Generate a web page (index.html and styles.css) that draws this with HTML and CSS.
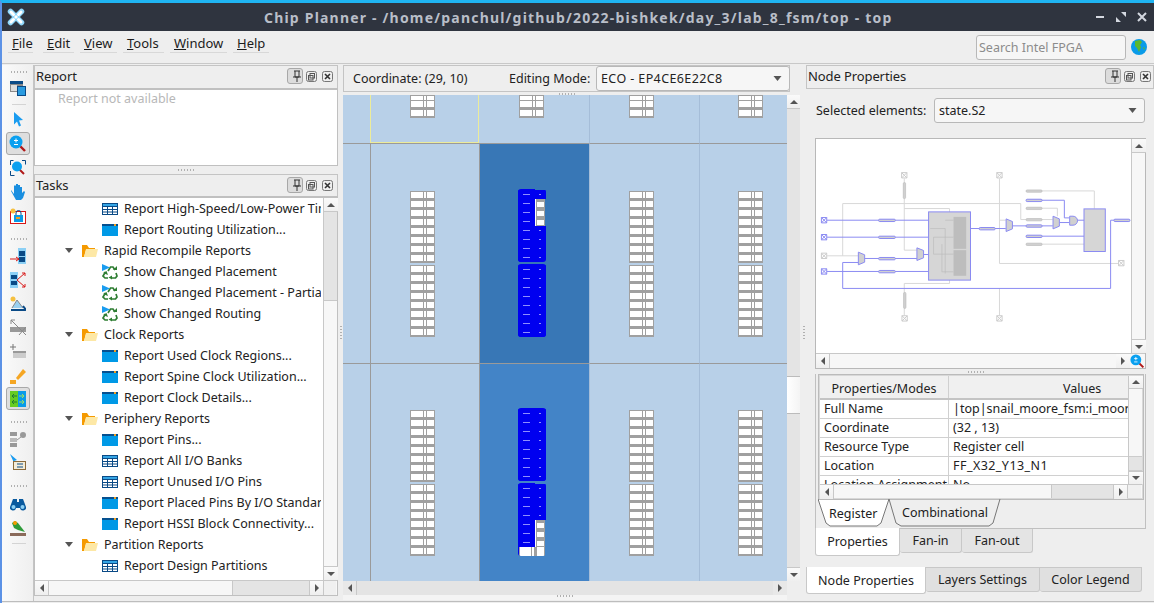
FILE: index.html
```html
<!DOCTYPE html>
<html lang="en">
<head>
<meta charset="utf-8">
<title>Chip Planner</title>
<link rel="stylesheet" href="styles.css">
</head>
<body>
<svg class="defs" width="0" height="0" aria-hidden="true">
  <symbol id="rep" viewBox="0 0 16 12"><rect width="16" height="12" fill="#0099e6"/><rect width="16" height="2" fill="#06508f"/><rect x="12" width="2" height="2" fill="#f0a020"/></symbol>
  <symbol id="tbl" viewBox="0 0 16 12"><rect x=".5" y=".5" width="15" height="11" fill="#fff" stroke="#0a4a86"/><rect x="1" y="1" width="14" height="2" fill="#35a5e5"/><path d="M1 3.500h14M1 6.500h14M1 9h14M5.500 4v7M10.500 4v7" stroke="#0a4a86" fill="none"/></symbol>
  <symbol id="fold" viewBox="0 0 16 12"><path d="M0 12V0h5l2 3h6v2H4L2 12z" fill="#f59a00"/><path d="M2 12 4 4h12l-2 8z" fill="#fde8a6"/></symbol>
  <symbol id="rec" viewBox="0 0 16 16"><path d="M6 7 8.500 3h2.500l2 3M14 9l1 3-1.500 2H10M6 14H3l-2-2 2.500-4" fill="none" stroke="#2e7d32" stroke-width="1.7"/><path d="M11 6h4V2zM10 11.500v4l-3.500-2zM1 9l3.500-2 1.500 4z" fill="#2e7d32"/><path d="M0 0l8 3.500L0 7z" fill="#1a9cf0"/></symbol>
  <symbol id="tri" viewBox="0 0 8 5"><path d="M0 0h8L4 5z" fill="#555"/></symbol>
  <symbol id="pin" viewBox="0 0 16 16"><path d="M5 3h6M6 3v6h4V3M4 9h8M8 9v5" fill="none" stroke="#333"/></symbol>
  <symbol id="flt" viewBox="0 0 11 11"><rect x=".5" y=".5" width="10" height="10" rx="2" fill="none" stroke="#777"/><rect x="4" y="2.500" width="4.500" height="4.500" fill="none" stroke="#555"/><rect x="2.500" y="4.500" width="4.500" height="4.500" fill="none" stroke="#555"/></symbol>
  <symbol id="cls" viewBox="0 0 11 11"><rect x=".5" y=".5" width="10" height="10" rx="2" fill="none" stroke="#777"/><path d="M3 3l5 5M8 3l-5 5" stroke="#333" stroke-width="1.600"/></symbol>
  <symbol id="zoomi" viewBox="0 0 18 18"><path d="M10 10l6 6" stroke="#b01818" stroke-width="2.400"/><circle cx="7" cy="7" r="6.500" fill="#0aa0f0"/><path d="M7 3.500v4M5 5.500h4M5 9.500h4" stroke="#fff" fill="none"/></symbol>
</svg>

<div class="window">
  <header class="titlebar">
    <svg class="logo" width="18" height="18" viewBox="0 0 18 18"><path d="M3.500 3.500l11 11M14.500 3.500l-11 11" stroke="#8fd6fa" stroke-width="5.500" stroke-linecap="round"/><path d="M4 4l2.500 2.500M14 4l-2.500 2.500M4 14l2.500-2.500M14 14l-2.500-2.500" stroke="#fff" stroke-width="3" stroke-linecap="round"/><path d="M9 7l2 2-2 2-2-2z" fill="#fff"/></svg>
    <h1 class="title">Chip Planner - /home/panchul/github/2022-bishkek/day_3/lab_8_fsm/top - top</h1>
    <div class="winbtns">
      <svg width="12" height="12" viewBox="0 0 12 12"><path d="M2 6h8" stroke="#d4d8e0" stroke-width="2"/></svg>
      <svg width="12" height="12" viewBox="0 0 12 12"><path d="M6 1h5v5zM1 6v5h5z" fill="#d4d8e0"/></svg>
      <svg width="12" height="12" viewBox="0 0 12 12"><path d="M2 2l8 8M10 2l-8 8" stroke="#d4d8e0" stroke-width="2"/></svg>
    </div>
  </header>

  <nav class="menubar">
    <span class="mi m1"><u>F</u>ile</span>
    <span class="mi m2"><u>E</u>dit</span>
    <span class="mi m3"><u>V</u>iew</span>
    <span class="mi m4"><u>T</u>ools</span>
    <span class="mi m5"><u>W</u>indow</span>
    <span class="mi m6"><u>H</u>elp</span>
    <span class="search">Search Intel FPGA</span>
    <svg class="globe" width="16" height="16" viewBox="0 0 16 16"><circle cx="8" cy="8" r="8" fill="#0a9be8"/><path d="M4 2l5-1 2 2-2 3 1 2-2 5-2-4-2-2z" fill="#5cb82e"/><path d="M12 8l2 1-1 2z" fill="#5cb82e"/></svg>
  </nav>

  <main class="main">
    <aside class="toolbar">
      <i class="handle h1"></i>
      <svg class="ti t87" width="16" height="16" viewBox="0 0 16 16"><rect y="1" width="13" height="11" fill="#8a8a8a"/><rect y="1" width="13" height="3" fill="#0a4a86"/><rect x="1" y="5" width="6" height="6" fill="#ddd"/><rect x="7.500" y="6.500" width="8" height="9" fill="#2a9be0" stroke="#0a4a86"/></svg>
      <i class="tsep s104"></i>
      <svg class="ti t118" width="16" height="16" viewBox="0 0 16 16"><path d="M4 1l9 8-4 .5 2 5-2 1-2-5-3 3z" fill="#1a9cf0"/></svg>
      <span class="tbtn b132"><svg width="18" height="18"><use href="#zoomi"/></svg></span>
      <svg class="ti t159" width="16" height="16" viewBox="0 0 16 16"><path d="M.5 5V.5h3M12 .5h3.500v4M.5 11v4.500h4" fill="none" stroke="#0a4a86"/><path d="M8 8l6 6" stroke="#b01818" stroke-width="2"/><circle cx="7" cy="6.500" r="5" fill="#0aa0f0"/></svg>
      <svg class="ti t183" width="16" height="16" viewBox="0 0 16 16"><path d="M1 6l3 4V2l1-1 1 1v4-6h2v6-5h2v6-4h2v6l2-2 1 1-2 6-2 2H6L1 7z" fill="#1a8fe0"/></svg>
      <svg class="ti t207" width="16" height="16" viewBox="0 0 16 16"><rect x=".5" y="3.500" width="15" height="12" fill="#fff" stroke="#d81818"/><circle cx="3" cy="3" r="2.500" fill="#f5c040"/><rect x="4" y="7" width="9" height="7" fill="#0a9be8"/><path d="M6 7V5a2.500 2.500 0 0 1 5 0v2" stroke="#0a4a86" fill="none"/><path d="M6 10h4" stroke="#f0a020" stroke-width="2"/></svg>
      <i class="handle h238"></i>
      <svg class="ti t248" width="16" height="16" viewBox="0 0 16 16"><rect x="8" y="0" width="8" height="16" fill="#8cd0f5"/><rect x="9" y="3" width="6" height="5" fill="#0a4a86"/><rect x="9" y="9" width="6" height="5" fill="#0a4a86"/><path d="M0 11h9M6 9l3 2-3 2" stroke="#d81818" fill="none"/></svg>
      <svg class="ti t271" width="16" height="16" viewBox="0 0 16 16"><rect width="8" height="16" fill="#8cd0f5"/><rect x="1" y="3" width="6" height="4" fill="#0a4a86"/><rect x="1" y="9" width="6" height="4" fill="#0a4a86"/><path d="M7 8l8-7M7 8l8 7M12 1h3v3M12 15h3v-3" stroke="#d81818" fill="none"/></svg>
      <svg class="ti t296" width="16" height="16" viewBox="0 0 16 16"><circle cx="3" cy="3" r="2.500" fill="#f5c040"/><path d="M2 12l5-8 6 8" fill="#9ad0f0" stroke="#888"/><path d="M1 14h15l-3-4" fill="none" stroke="#0a4a86" stroke-width="2"/></svg>
      <svg class="ti t318" width="16" height="16" viewBox="0 0 16 16"><rect y="8" width="16" height="5" fill="#999"/><path d="M1 1l9 9M1 1h4M1 1v4M9 9l7 7M16 8l-7 8" stroke="#888" fill="none"/></svg>
      <svg class="ti t342" width="16" height="16" viewBox="0 0 16 16"><path d="M3 1v6M0 4h6" stroke="#777"/><rect x="3" y="8" width="13" height="2" fill="#999"/><rect x="3" y="10" width="13" height="5" fill="#ccc"/></svg>
      <svg class="ti t367" width="16" height="16" viewBox="0 0 16 16"><path d="M6 10l7-9 3 3-8 8z" fill="#f5a623"/><rect y="12" width="6" height="4" fill="#f5a623"/></svg>
      <span class="tbtn b387"><svg width="16" height="16" viewBox="0 0 16 16"><rect width="8" height="16" fill="#66cc22"/><rect x="8" width="8" height="16" fill="#0a9be8"/><path d="M7 5H2l2-2M2 5l2 2" stroke="#1c7a30" fill="none"/><path d="M9 11h5l-2-2M14 11l-2 2M9 5h5l-2-2M14 5l-2 2" stroke="#9fe060" fill="none"/><path d="M7 11H2l2-2M2 11l2 2" stroke="#1c7a30" fill="none"/></svg></span>
      <i class="handle h421"></i>
      <svg class="ti t430" width="16" height="16" viewBox="0 0 16 16"><rect y="1" width="7" height="4" fill="#999"/><rect y="7" width="7" height="4" fill="#bbb"/><rect y="12" width="7" height="4" fill="#999"/><circle cx="13" cy="4" r="3" fill="#999"/><path d="M7 9l4-3" stroke="#999"/></svg>
      <svg class="ti t453" width="16" height="16" viewBox="0 0 16 16"><path d="M0 0l7 6-3 1 1 4z" fill="#1a9cf0"/><rect x="3.500" y="7.500" width="12" height="8" fill="#f3ecd8" stroke="#8a6a3a"/><path d="M7 10h6M7 13h6" stroke="#0a4a86"/></svg>
      <i class="handle h485"></i>
      <svg class="ti t495" width="16" height="16" viewBox="0 0 16 16"><path d="M3 3h4v3h2V3h4l3 8a3 3 0 1 1-6 1H6a3 3 0 1 1-6-1z" fill="#0a5a9e"/><circle cx="3.500" cy="11" r="2" fill="#8cd0f5"/><circle cx="12.500" cy="11" r="2" fill="#8cd0f5"/></svg>
      <svg class="ti t519" width="16" height="16" viewBox="0 0 16 16"><path d="M2 3l3-2 3 2 7 9-7-2-4-2z" fill="#2e9b3a"/><circle cx="5" cy="3" r="2" fill="#f59a00"/><path d="M0 13h16v3H0z" fill="#8a6a5a"/></svg>
      <i class="tsep s543"></i>
    </aside>

    <section class="leftcol">
      <div class="dockhead"><span class="dtitle">Report</span><span class="dockbtns"><span class="pinbox"><svg width="16" height="16"><use href="#pin"/></svg></span><svg width="11" height="11"><use href="#flt"/></svg><svg width="11" height="11"><use href="#cls"/></svg></span></div>
      <div class="reportbody">Report not available</div>
      <div class="hsplit"><i class="handle"></i></div>
      <div class="dockhead"><span class="dtitle">Tasks</span><span class="dockbtns"><span class="pinbox"><svg width="16" height="16"><use href="#pin"/></svg></span><svg width="11" height="11"><use href="#flt"/></svg><svg width="11" height="11"><use href="#cls"/></svg></span></div>
      <div class="taskbox">
        <div class="taskupper">
          <div class="tree">
            <div class="leaf"><svg width="16" height="12"><use href="#tbl"/></svg>Report High-Speed/Low-Power Timing Summary</div>
            <div class="leaf"><svg width="16" height="12"><use href="#rep"/></svg>Report Routing Utilization...</div>
            <div class="parent"><svg class="arr" width="8" height="5"><use href="#tri"/></svg><svg width="16" height="12"><use href="#fold"/></svg>Rapid Recompile Reports</div>
            <div class="leaf"><svg width="16" height="16"><use href="#rec"/></svg>Show Changed Placement</div>
            <div class="leaf"><svg width="16" height="16"><use href="#rec"/></svg>Show Changed Placement - Partial</div>
            <div class="leaf"><svg width="16" height="16"><use href="#rec"/></svg>Show Changed Routing</div>
            <div class="parent"><svg class="arr" width="8" height="5"><use href="#tri"/></svg><svg width="16" height="12"><use href="#fold"/></svg>Clock Reports</div>
            <div class="leaf"><svg width="16" height="12"><use href="#rep"/></svg>Report Used Clock Regions...</div>
            <div class="leaf"><svg width="16" height="12"><use href="#rep"/></svg>Report Spine Clock Utilization...</div>
            <div class="leaf"><svg width="16" height="12"><use href="#rep"/></svg>Report Clock Details...</div>
            <div class="parent"><svg class="arr" width="8" height="5"><use href="#tri"/></svg><svg width="16" height="12"><use href="#fold"/></svg>Periphery Reports</div>
            <div class="leaf"><svg width="16" height="12"><use href="#rep"/></svg>Report Pins...</div>
            <div class="leaf"><svg width="16" height="12"><use href="#tbl"/></svg>Report All I/O Banks</div>
            <div class="leaf"><svg width="16" height="12"><use href="#tbl"/></svg>Report Unused I/O Pins</div>
            <div class="leaf"><svg width="16" height="12"><use href="#rep"/></svg>Report Placed Pins By I/O Standard</div>
            <div class="leaf"><svg width="16" height="12"><use href="#rep"/></svg>Report HSSI Block Connectivity...</div>
            <div class="parent"><svg class="arr" width="8" height="5"><use href="#tri"/></svg><svg width="16" height="12"><use href="#fold"/></svg>Partition Reports</div>
            <div class="leaf"><svg width="16" height="12"><use href="#tbl"/></svg>Report Design Partitions</div>
          </div>
          <div class="vbar vtask">
            <span class="sbtn"><i class="up"></i></span>
            <span class="thumb th-task"></span>
            <span class="track"></span>
            <span class="sbtn"><i class="down"></i></span>
          </div>
        </div>
        <div class="hbar">
          <span class="sbtn"><i class="left"></i></span>
          <span class="track tr-a"></span>
          <span class="thumb th-a"></span>
          <span class="sbtn"><i class="right"></i></span>
          <span class="corner"></span>
        </div>
      </div>
    </section>
    <div class="lsplit"><i class="vhandle"></i></div>

    <section class="centercol">
      <div class="ctoolbar">
        <span class="coord">Coordinate: (29, 10)</span>
        <span class="edit">Editing Mode:</span>
        <span class="combo cmode">ECO - EP4CE6E22C8<svg width="9" height="5"><use href="#tri"/></svg></span>
      </div>
      <div class="dotsrow"><i class="handle"></i></div>
      <div class="canvasrow">
      <div class="canvas">
        <div class="cell c0 r0"></div>
        <div class="cell sel r0"><div class="grp cut"></div></div>
        <div class="cell r0 lt"><div class="grp cut"></div></div>
        <div class="cell r0 lt"><div class="grp cut"></div></div>
        <div class="cell r0 lt p39"><div class="grp cut"></div></div>

        <div class="cell c0 r1"></div>
        <div class="cell r1"><div class="chip"><div class="grp"></div><div class="grp"></div></div></div>
        <div class="cell r1 dark1 blue">
          <div class="bchip">
            <div class="bgrp"><b class="bw"></b><b class="bh"></b><b class="bh"></b><b class="bh"></b><b class="bw"></b><b class="bw"></b><b class="bw"></b><b class="bw"></b></div>
            <div class="bgrp"><b class="bw"></b><b class="bw"></b><b class="bw"></b><b class="bw"></b><b class="bw"></b><b class="bw"></b><b class="bw"></b><b class="bw"></b></div>
          </div>
        </div>
        <div class="cell r1 lt"><div class="chip"><div class="grp"></div><div class="grp"></div></div></div>
        <div class="cell r1 lt p39"><div class="chip"><div class="grp"></div><div class="grp"></div></div></div>

        <div class="cell c0 r2"></div>
        <div class="cell r2"><div class="chip"><div class="grp"></div><div class="grp"></div></div></div>
        <div class="cell r2 dark2 blue">
          <div class="bchip">
            <div class="bgrp"><b class="bw"></b><b class="bw"></b><b class="bw"></b><b class="bw"></b><b class="bw"></b><b class="bw"></b><b class="bw"></b><b class="bw"></b></div>
            <div class="bgrp"><b class="bw"></b><b class="bw"></b><b class="bw"></b><b class="bw"></b><b class="bh"></b><b class="bh"></b><b class="bh"></b><b class="bg"></b></div>
          </div>
        </div>
        <div class="cell r2 lt"><div class="chip"><div class="grp"></div><div class="grp"></div></div></div>
        <div class="cell r2 lt p39"><div class="chip"><div class="grp"></div><div class="grp"></div></div></div>
      </div>
      <div class="vbar vcanvas">
        <span class="sbtn"><i class="up"></i></span>
        <span class="track t-a"></span>
        <span class="thumb th-canvas"></span>
        <span class="track"></span>
        <span class="sbtn"><i class="down"></i></span>
      </div>
      </div>
      <div class="hbar hcanvas">
        <span class="sbtn"><i class="left"></i></span>
        <span class="track"></span>
        <span class="sbtn"><i class="right"></i></span>
      </div>
      <div class="cbottom2"><i class="handle"></i></div>
    </section>

    <div class="vsplit"><i class="vhandle"></i></div>

    <section class="rightcol">
      <div class="dockhead"><span class="dtitle">Node Properties</span><span class="dockbtns"><span class="pinbox"><svg width="16" height="16"><use href="#pin"/></svg></span><svg width="11" height="11"><use href="#flt"/></svg><svg width="11" height="11"><use href="#cls"/></svg></span></div>
      <div class="selrow"><span class="sellabel">Selected elements:</span><span class="combo csel">state.S2<svg width="9" height="5"><use href="#tri"/></svg></span></div>
      <div class="diagframe">
        <div class="diagtop">
          <svg class="diagram" width="315" height="215" viewBox="17 26 946 646">
            <g fill="none" stroke="#d8d8d8" stroke-width="3">
              <path d="M50 377H143M97 377V220H632V268H728M282 145V360H320M282 235H418V460H282V555M568 145V400H925M568 475V555M568 270H587M648 182H853V235M648 234H742V258M648 342H822"/>
            </g>
            <g fill="none" stroke="#8b8bf2" stroke-width="3">
              <path d="M50 270H355M50 321H355M50 424H355M163 385H320M340 373H355M97 397H143M97 397V475H902V270H960M481 295H587M607 287H728M748 277H778M648 210H763V263H778M800 270H822M648 318H822"/>
            </g>
            <rect x="355" y="245" width="126" height="205" fill="#d6d6d6" stroke="#8b8bf2" stroke-width="3"/>
            <rect x="430" y="260" width="38" height="96" fill="#bdbdbd"/>
            <rect x="430" y="360" width="38" height="77" fill="#bdbdbd"/>
            <path d="M360 295H405V430M370 321H430M370 321V372H430M395 342V425H430M405 270H430" fill="none" stroke="#bbb" stroke-width="2"/>
            <rect x="822" y="236" width="64" height="128" fill="#d6d6d6" stroke="#8b8bf2" stroke-width="3"/>
            <g fill="#d0d0d0" stroke="#8b8bf2" stroke-width="3">
              <path d="M144 366l19 8v22l-19 8zM320 353l20 8v22l-20 8zM588 266l19 8v22l-19 8zM729 258l19 8v22l-19 8zM779 258h10a13 13 0 0 1 0 27h-10z"/>
              <rect x="205" y="267" width="50" height="7" rx="3"/><rect x="205" y="318" width="50" height="7" rx="3"/><rect x="205" y="382" width="50" height="7" rx="3"/><rect x="205" y="421" width="50" height="7" rx="3"/><rect x="507" y="292" width="48" height="7" rx="3"/><rect x="648" y="207" width="48" height="7" rx="3"/><rect x="648" y="284" width="48" height="7" rx="3"/><rect x="648" y="315" width="48" height="7" rx="3"/><rect x="912" y="267" width="48" height="7" rx="3"/>
            </g>
            <g fill="#d0d0d0" stroke="#bbb" stroke-width="2">
              <rect x="648" y="179" width="48" height="7" rx="3"/><rect x="648" y="231" width="48" height="7" rx="3"/><rect x="648" y="265" width="48" height="7" rx="3"/><rect x="648" y="339" width="48" height="7" rx="3"/><rect x="279" y="157" width="7" height="48" rx="3"/><rect x="280" y="487" width="7" height="48" rx="3"/>
            </g>
            <g fill="#fff" stroke="#8b8bf2" stroke-width="3">
              <path d="M33 262h16v16H33zM33 262l16 16M49 262l-16 16M33 313h16v16H33zM33 313l16 16M49 313l-16 16M33 416h16v16H33zM33 416l16 16M49 416l-16 16"/>
            </g>
            <g fill="#fff" stroke="#ccc" stroke-width="3">
              <path d="M33 369h16v16H33zM33 369l16 16M49 369l-16 16M274 127h16v16h-16zM274 127l16 16M290 127l-16 16M560 127h16v16h-16zM560 127l16 16M576 127l-16 16M926 391h16v16h-16zM926 391l16 16M942 391l-16 16M275 557h16v16h-16zM275 557l16 16M291 557l-16 16M560 557h16v16h-16zM560 557l16 16M576 557l-16 16"/>
            </g>
          </svg>
          <div class="vbar vdiag">
            <span class="sbtn"><i class="up"></i></span>
            <span class="track"></span>
            <span class="sbtn"><i class="down"></i></span>
          </div>
        </div>
        <div class="hbar hdiag">
          <span class="sbtn"><i class="left"></i></span>
          <span class="track"></span>
          <span class="sbtn"><i class="right"></i></span>
          <svg class="corner-zoom" width="15" height="15"><use href="#zoomi"/></svg>
        </div>
      </div>
      <div class="rsplit"><i class="handle"></i></div>

      <div class="tabwidget">
        <div class="tblframe">
          <div class="tbltop">
            <div class="tbl">
              <div class="tr th"><span class="c1 hc">Properties/Modes</span><span class="c2 hc">Values</span></div>
              <div class="tr"><span class="c1">Full Name</span><span class="c2">|top|snail_moore_fsm:i_moore_fsm|state.S2</span></div>
              <div class="tr"><span class="c1">Coordinate</span><span class="c2">(32 , 13)</span></div>
              <div class="tr"><span class="c1">Resource Type</span><span class="c2">Register cell</span></div>
              <div class="tr"><span class="c1">Location</span><span class="c2 caps">FF_X32_Y13_N1</span></div>
              <div class="tr"><span class="c1">Location Assignment</span><span class="c2">No</span></div>
            </div>
            <div class="vbar vtbl">
              <span class="sbtn small"><i class="up"></i></span>
              <span class="track"></span>
              <span class="thumb th-tbl"></span>
              <span class="sbtn small"><i class="down"></i></span>
            </div>
          </div>
          <div class="hbar htbl">
            <span class="sbtn"><i class="left"></i></span>
            <span class="track tr-b"></span>
            <span class="thumb th-b"></span>
            <span class="sbtn"><i class="right"></i></span>
            <span class="corner"></span>
          </div>
        </div>
        <div class="modetabs">
          <svg class="tabshape" width="190" height="30" viewBox="0 0 190 30"><path d="M0 0l8 24 4 3h47l4-3L71 0z" fill="#fff" stroke="#777"/><path d="M71 0l7 24 5 3h88l4-3 7-24" fill="none" stroke="#777"/></svg>
          <span class="mtab mreg">Register</span>
          <span class="mtab mcomb">Combinational</span>
        </div>
      </div>

      <div class="fantabs">
        <span class="ftab on">Properties</span>
        <span class="ftab fanin">Fan-in</span>
        <span class="ftab fanout">Fan-out</span>
      </div>

      <div class="spacer"></div>

      <div class="bottabs">
        <span class="btab on">Node Properties</span>
        <span class="btab lay">Layers Settings</span>
        <span class="btab leg">Color Legend</span>
      </div>
    </section>
  </main>
  <footer class="status"></footer>
</div>
</body>
</html>
```
FILE: styles.css
```css
* { box-sizing: border-box; }
html, body { margin: 0; padding: 0; }
body {
  width: 1154px; height: 603px; overflow: hidden;
  font-family: "Noto Sans", sans-serif; font-size: 12.5px; color: #1c1c1c;
  background: #eeeeee;
}
.defs { position: absolute; }
svg { display: block; flex: none; }
.window {
  width: 1154px; height: 603px; display: flex; flex-direction: column;
  border-top: 3px solid #1fb4f2; border-left: 2px solid #5c92e6;
}
.titlebar {
  height: 28px; background: #2f343f; display: flex; align-items: center;
  padding-left: 5px; flex: none;
}
.title {
  margin: 0 0 0 239px; font-size: 14px; font-weight: 700; color: #b9bec8;
  letter-spacing: 1.2px; white-space: nowrap; font-family: "Noto Sans", sans-serif;
}
.winbtns { margin-left: auto; display: flex; gap: 9px; padding-right: 6px; }

.menubar {
  height: 33px; flex: none; display: flex; align-items: flex-start;
  padding: 0 0 0 6px; border-bottom: 1px solid #c8c8c8; background: #eeeeee;
  font-size: 13px;
}
.mi {
  display: block; height: 22px; line-height: 22px; padding: 1px 0 0 4px; border-bottom: 1px solid #d8d8d8;
}
.m1 { width: 25px; } .m2 { width: 31px; margin-left: 10px; } .m3 { width: 37px; margin-left: 6px; }
.m4 { width: 41px; margin-left: 6px; } .m5 { width: 57px; margin-left: 6px; } .m6 { width: 36px; margin-left: 6px; }
.search {
  margin: 4px 0 0 707px; width: 150px; height: 25px; border: 1px solid #b8b8b8; border-radius: 3px;
  background: #f6f6f6; color: #8c8c8c; line-height: 23px; padding-left: 2px; font-size: 12.5px;
}
.globe { margin: 8px 0 0 5px; }

.main { flex: 1; display: flex; min-height: 0; padding-top: 1px; }
.status { height: 2px; flex: none; border-top: 1px solid #bdbdbd; }

/* left tool strip: a free column of icons at their own offsets */
.toolbar {
  width: 32px; flex: none; position: relative;
  background: linear-gradient(to right, #fafafa, #efefef);
  border-right: 1px solid #c4c4c4;
}
.ti { position: absolute; left: 8px; }
.t87 { top: 15px; } .t118 { top: 46px; } .t159 { top: 95px; } .t183 { top: 119px; } .t207 { top: 143px; }
.t248 { top: 183px; } .t271 { top: 207px; } .t296 { top: 231px; } .t318 { top: 254px; } .t342 { top: 278px; }
.t367 { top: 303px; } .t430 { top: 366px; } .t453 { top: 389px; } .t495 { top: 431px; } .t519 { top: 455px; }
.tsep { position: absolute; left: 10px; width: 14px; height: 1px; background: #d4d4d4; }
.s104 { top: 39px; } .s543 { top: 478px; }
.toolbar .handle { position: absolute; left: 9px; }
.h1 { top: 6px; } .h238 { top: 173px; } .h421 { top: 356px; } .h485 { top: 420px; }
.tbtn {
  position: absolute; left: 4px; width: 24px; height: 23px; border: 1px solid #a8a8a8; border-radius: 3px;
  background: #dedede; display: flex; align-items: center; justify-content: center;
}
.b132 { top: 67px; } .b387 { top: 322px; }
.handle {
  display: block; width: 16px; height: 2px;
  background: repeating-linear-gradient(to right, #b0b0b0 0 1px, transparent 1px 3px);
}

.leftcol { width: 304px; flex: none; display: flex; flex-direction: column; padding-bottom: 5px; }
.dockhead {
  height: 24px; flex: none; border: 1px solid #c4c4c4; display: flex; align-items: center;
  padding-left: 1px; background: #eeeeee; color: #222;
}
.dtitle { display: block; font-size: 13px; letter-spacing: -.1px; padding-bottom: 2px; }
.dockbtns { margin-left: auto; display: flex; align-items: center; gap: 4px; padding: 0 2px 2px 0; }
.leftcol .dockbtns { padding-right: 4px; }
.dockbtns svg:last-child { margin-left: 1px; }
.pinbox {
  width: 16px; height: 16px; border: 1px solid #a8a8a8; border-radius: 3px; background: #dcdcdc;
  display: block; margin-right: -1px;
}
.pinbox svg { margin: -1px; }
.reportbody {
  height: 78px; flex: none; background: #fff; border: 1px solid #c0c0c0; border-top-width: 2px;
  color: #b8b8b8; padding: 0 0 0 23px; line-height: 17px; margin-top: -1px;
}
.hsplit { height: 8px; flex: none; display: flex; justify-content: center; align-items: center; }
.taskbox { flex: 1; min-height: 0; display: flex; flex-direction: column; border: 1px solid #c0c0c0; border-top: 2px solid #c0c0c0; background: #fff; margin-top: -2px; }
.taskupper { flex: 1; min-height: 0; display: flex; }
.tree { width: 288px; flex: none; overflow: hidden; white-space: nowrap; clip-path: inset(0 2px 0 0); }
.leaf, .parent { height: 21px; display: flex; align-items: center; color: #222; }
.leaf { padding-left: 67px; }
.leaf svg { margin-right: 6px; }
.parent { padding-left: 30px; }
.parent .arr { margin-right: 9px; }
.parent svg:nth-child(2) { margin-right: 6px; }
.lsplit { width: 5px; flex: none; display: flex; align-items: center; padding: 0 0 0 2px; }
.vbar { display: flex; flex-direction: column; flex: none; background: #f7f7f7; border-left: 1px solid #c8c8c8; }
.hbar { display: flex; flex: none; height: 15px; background: #f7f7f7; border-top: 1px solid #c8c8c8; }
.vtask { width: 14px; }
.sbtn { flex: none; display: flex; align-items: center; justify-content: center; width: 14px; height: 14px; background: linear-gradient(#fafafa, #efefef); border: 0 solid #c8c8c8; }
.vbar .sbtn:first-child { border-bottom-width: 1px; }
.vbar .sbtn:last-child { border-top-width: 1px; }
.hbar .sbtn:first-child { border-right-width: 1px; }
.hbar .sbtn:nth-last-child(2) { border-left-width: 1px; }
.up, .down, .left, .right { display: block; width: 0; height: 0; border: 4px solid transparent; }
.up { border-top: 0; border-bottom: 4px solid #555; }
.down { border-bottom: 0; border-top: 4px solid #555; }
.left { border-left: 0; border-right: 4px solid #555; }
.right { border-right: 0; border-left: 4px solid #555; }
.track { flex: 1; display: block; }
.thumb { display: block; flex: none; background: #e4e4e4; }
.th-task { height: 89px; border-bottom: 1px solid #c8c8c8; }
.tr-a { flex: none; width: 183px; }
.th-a { width: 77px; border-left: 1px solid #c8c8c8; }
.corner { width: 13px; flex: none; display: block; border-left: 1px solid #c8c8c8; background: #f0f0f0; }

.centercol { width: 457px; flex: none; display: flex; flex-direction: column; }
.ctoolbar {
  height: 27px; width: 447px; flex: none; display: flex; align-items: center; padding-left: 9px;
  border: 1px solid #c4c4c4; background: #eeeeee; color: #222; white-space: nowrap;
}
.coord { display: block; width: 156px; flex: none; }
.edit { display: block; width: 87px; flex: none; }
.combo {
  display: flex; align-items: center; justify-content: space-between; height: 25px;
  border: 1px solid #b8b8b8; border-radius: 3px; background: #f6f6f6; padding: 0 7px 0 4px; color: #222;
}
.cmode { width: 194px; flex: none; letter-spacing: .4px; }
.dotsrow { height: 3px; width: 447px; flex: none; display: flex; justify-content: center; align-items: center; }
.canvasrow { display: flex; flex: none; height: 486px; }
.canvas {
  height: 486px; flex: none; width: 444px; display: grid; overflow: hidden;
  grid-template-columns: 27px 109px 110px 110px 88px;
  grid-template-rows: 48px 220px 218px;
  background: #b8d0e8;
}
.vcanvas { width: 13px; background: #e4e4e4; border-left: 0; }
.vcanvas .sbtn { width: 13px; }
.vcanvas .t-a { flex: none; height: 267px; }
.th-canvas { height: 38px; background: linear-gradient(to right, #ffffff, #f4f4f4); border-top: 1px solid #bbb; border-bottom: 1px solid #bbb; }
.hcanvas { width: 444px; height: 14px; background: #e4e4e4; border-top: 0; }
.hcanvas .sbtn { height: 14px; background: #e8e8e8; }
.cell { border-left: 1px solid #9a9a9a; border-top: 1px solid #9a9a9a; padding-left: 39px; background: #b8d0e8; overflow: hidden; }
.c0 { border-left: 0; padding: 0; }
.r0 { border-top: 0; }
.r1 { padding-top: 47px; }
.r2 { padding-top: 46px; }
.lt { border-left-color: #a5bdd8; }
.p39 { padding-left: 38px; }
.sel { border: 1px solid #ecec9a; border-top: 0; }
.cell.sel + .cell { border-left: 0; padding-left: 40px; }
.dark1 { background: #3877b6; }
.dark2 { background: #4384c7; }
.blue { padding-left: 38px; }
.r1.blue { padding-top: 45px; }
.r2.blue { padding-top: 44px; }
.grp {
  width: 25px; height: 72px;
  background:
    linear-gradient(to right, #a0a0a0 0 1px, transparent 1px 13px, #a0a0a0 13px 14px, transparent 14px 16px, #a0a0a0 16px 17px, transparent 17px 24px, #a0a0a0 24px),
    repeating-linear-gradient(#a0a0a0 0 1px, #fff 1px 7px, #a0a0a0 7px 9px);
}
.grp.cut { height: 23px; background-position: 0 0, 0 5px; }
.chip { display: flex; flex-direction: column; gap: 2px; }
.bchip { width: 28px; display: flex; flex-direction: column; gap: 2px; }
.bgrp { display: flex; flex-direction: column; overflow: hidden; border-radius: 3px; padding-top: 1px; background: #0000f0; }
.bgrp b { display: block; width: 28px; height: 9px; position: relative; }
.bgrp:has(.bh), .bgrp:has(.bg) { background: linear-gradient(to right, #0000f0 17px, transparent 17px); }
.bw { background: #0000f0; }
.bh {
  background:
    linear-gradient(to right, #0000f0 0 17px, #fff 17px 18px, #a0a0a0 18px 19px, transparent 19px 26px, #a0a0a0 26px 27px, transparent 27px) 0 0 / 28px 9px no-repeat,
    linear-gradient(#a0a0a0 0 3px, #fff 3px 8px, #a0a0a0 8px) 0 0 / 27px 9px no-repeat;
}
.bg { background: linear-gradient(to right, transparent 0 1px, #a0a0a0 1px 2px, #fff 2px 13px, #a0a0a0 13px 14px, #fff 14px 16px, #a0a0a0 16px 19px, #fff 19px 26px, #a0a0a0 26px 27px, transparent 27px); }
.bw::before, .bh::before {
  content: ""; position: absolute; left: 5px; top: 4px; width: 7px; height: 1px; background: #8f8fff;
}
.bw::after {
  content: ""; position: absolute; left: 21px; top: 4px; width: 2px; height: 1px; background: #8f8fff;
}
.cbottom2 { height: 5px; flex: none; background: #f4f4f4; width: 444px; display: flex; justify-content: center; }
.vsplit { width: 6px; flex: none; display: flex; align-items: center; padding: 0 0 0 3px; }
.vhandle { display: block; width: 2px; height: 14px; background: repeating-linear-gradient(#b0b0b0 0 1px, transparent 1px 3px); }

.rightcol { flex: 1; min-width: 0; display: flex; flex-direction: column; }
.selrow { height: 25px; margin: 9px 0 15px 10px; display: flex; align-items: center; flex: none; color: #222; white-space: nowrap; }
.sellabel { display: block; width: 118px; flex: none; }
.csel { width: 211px; padding-left: 4px; flex: none; }
.diagframe {
  height: 231px; flex: none; margin-left: 9px; width: 331px; border: 1px solid #b8b8b8;
  display: flex; flex-direction: column; background: #fff;
}
.diagtop { flex: 1; min-height: 0; display: flex; }
.diagram { filter: blur(.35px); width: 315px; }
.vdiag { width: 14px; }
.hdiag { position: relative; padding-right: 15px; }
.hdiag .sbtn:nth-last-child(2) { border-left-width: 0; }
.hdiag .sbtn:nth-of-type(2) { border-left-width: 1px; }
.corner-zoom { position: absolute; right: 0; top: 0; }
.rsplit { height: 5px; width: 340px; flex: none; display: flex; justify-content: center; align-items: center; }

.tabwidget {
  height: 155px; flex: none; margin-left: 9px; width: 331px; border-right: 1px solid #c0c0c0; border-bottom: 1px solid #c0c0c0;
  border-left: 1px solid #c0c0c0; padding: 0 1px 0 2px; display: flex; flex-direction: column;
}
.tblframe {
  height: 126px; flex: none; border: 1px solid #bbb; padding: 1px; display: flex; flex-direction: column;
  background: #fff; box-shadow: inset 0 0 0 1px #d8d8d8;
}
.tbltop { flex: 1; min-height: 0; display: flex; }
.tbl { width: 308px; flex: none; overflow: hidden; white-space: nowrap; }
.tr { height: 19px; display: flex; border-bottom: 1px solid #d0d0d0; color: #222; line-height: 18px; }
.th { height: 24px; background: #f0f0f0; border-bottom: 2px solid #c4c4c4; line-height: 25px; }
.c1 { width: 129px; flex: none; padding-left: 4px; border-right: 1px solid #d0d0d0; overflow: hidden; }
.c2 { flex: 1; padding-left: 4px; overflow: hidden; }
.caps { letter-spacing: .45px; }
.c1.hc { text-align: center; padding: 0; }
.c2.hc { padding-left: 114px; }
.vtbl { width: 14px; }
.th-tbl { height: 15px; border-top: 1px solid #ccc; border-bottom: 1px solid #ccc; }
.sbtn.small { height: 13px; }
.htbl { height: 14px; }
.tr-b { flex: none; width: 217px; }
.th-b { width: 62px; border-left: 1px solid #c8c8c8; }
.htbl .corner { width: 14px; }
.modetabs { flex: 1; display: flex; position: relative; }
.tabshape { position: absolute; left: 0; top: -1px; }
.mtab { position: relative; display: block; line-height: 26px; }
.mreg { margin-left: 11px; width: 72px; line-height: 27px; }
.mcomb { margin-left: 1px; }

.fantabs { height: 27px; flex: none; margin-left: 9px; display: flex; align-items: flex-start; }
.ftab {
  display: block; height: 24px; line-height: 24px; background: #e4e4e4; border: 1px solid #c8c8c8; border-top: 0; border-left: 0;
  border-radius: 0 0 3px 3px; text-align: center; color: #222;
}
.ftab.on { width: 85px; height: 28px; line-height: 28px; background: #fff; border-left: 1px solid #c8c8c8; margin-top: -1px; }
.fanin { width: 62px; } .fanout { width: 71px; }
.spacer { flex: 1; }
.bottabs { height: 34px; flex: none; display: flex; align-items: flex-start; }
.btab {
  display: block; height: 25px; line-height: 24px; background: #e0e0e0; border: 1px solid #c8c8c8; border-left: 0;
  border-radius: 0 0 3px 3px; text-align: center; color: #222;
}
.btab.on { width: 120px; height: 27px; line-height: 27px; background: #fff; border-left: 1px solid #c8c8c8; border-top: 0; }
.lay { width: 114px; } .leg { width: 102px; }
```
